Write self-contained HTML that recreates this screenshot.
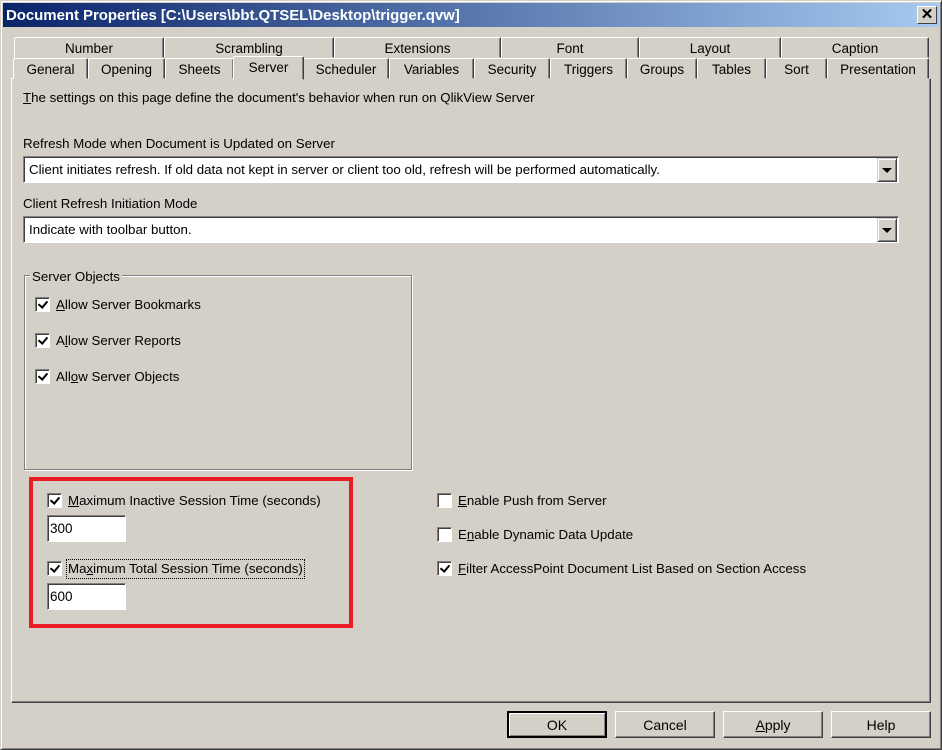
<!DOCTYPE html>
<html><head><style>
*{box-sizing:border-box;margin:0;padding:0}
body{width:942px;height:750px;background:#d4d0c8;font-family:"Liberation Sans",sans-serif;font-size:13.3px;color:#000;position:relative;overflow:hidden}
.a{position:absolute}
.win{left:0;top:0;width:942px;height:750px;border:1px solid #d4d0c8;border-right-color:#404040;border-bottom-color:#404040;box-shadow:inset 1px 1px 0 #fff,inset -1px -1px 0 #808080}
.title{left:3px;top:3px;width:936px;height:24px;background:linear-gradient(90deg,#0a246a,#a6caf0);color:#fff;font-weight:bold;font-size:15px;letter-spacing:-0.05px;line-height:25px;padding-left:3px}
.x{left:917px;top:6px;width:20px;height:18px;background:#d4d0c8;border:1px solid;border-color:#fff #404040 #404040 #fff;color:#000;font-weight:bold;font-size:15px;line-height:15px;text-align:center}
.tab{height:21px;border:1px solid;border-color:#fff #404040 transparent #fff;box-shadow:inset -1px 0 0 #808080;text-align:center;line-height:21px;font-size:13.5px;background:#d4d0c8;border-radius:2px 2px 0 0}
.panel{left:11px;top:78px;width:920px;height:625px;border:1px solid;border-color:#fff #404040 #404040 #fff;box-shadow:inset -1px -1px 0 #808080}
.combo{height:27px;background:#fff;border:1px solid;border-color:#808080 #fff #fff #808080;box-shadow:inset 1px 1px 0 #404040;line-height:26px;padding-left:5px}
.dd{right:1px;top:1px;width:20px;height:24px;background:#d4d0c8;border:1px solid;border-color:#d4d0c8 #404040 #404040 #d4d0c8;box-shadow:inset 1px 1px 0 #fff,inset -1px -1px 0 #808080}
.dd:after{content:"";position:absolute;left:4px;top:9px;border-left:5px solid transparent;border-right:5px solid transparent;border-top:5px solid #000}
.cb{width:15px;height:15px;background:#fff;border:1px solid;border-color:#808080 #fff #fff #808080;box-shadow:inset 1px 1px 0 #404040}
.cb.c:after{content:"";position:absolute;left:4px;top:1px;width:4px;height:7px;border-right:2px solid #000;border-bottom:2px solid #000;transform:rotate(40deg)}
.lbl{line-height:18px}
.edit{width:79px;height:27px;background:#fff;border:1px solid;border-color:#808080 #fff #fff #808080;box-shadow:inset 1px 1px 0 #404040;padding-left:2px;line-height:26px;font-size:13.5px}
.btn{top:711px;width:100px;height:27px;border:1px solid;border-color:#fff #404040 #404040 #fff;box-shadow:inset -1px -1px 0 #808080;text-align:center;line-height:26px;font-size:14px}
u{text-decoration:underline}
</style></head><body>
<div class="a win"></div>
<div class="a title">Document Properties [C:\Users\bbt.QTSEL\Desktop\trigger.qvw]</div>
<div class="a x">✕</div>

<div class="a tab" style="left:14px;top:37px;width:150px">Number</div>
<div class="a tab" style="left:164px;top:37px;width:170px">Scrambling</div>
<div class="a tab" style="left:334px;top:37px;width:167px">Extensions</div>
<div class="a tab" style="left:501px;top:37px;width:138px">Font</div>
<div class="a tab" style="left:639px;top:37px;width:142px">Layout</div>
<div class="a tab" style="left:781px;top:37px;width:148px">Caption</div>

<div class="a panel"></div>
<div class="a tab" style="left:13px;top:58px;width:75px">General</div>
<div class="a tab" style="left:88px;top:58px;width:77px">Opening</div>
<div class="a tab" style="left:165px;top:58px;width:69px">Sheets</div>
<div class="a tab" style="left:303px;top:58px;width:86px">Scheduler</div>
<div class="a tab" style="left:389px;top:58px;width:85px">Variables</div>
<div class="a tab" style="left:474px;top:58px;width:76px">Security</div>
<div class="a tab" style="left:550px;top:58px;width:77px">Triggers</div>
<div class="a tab" style="left:627px;top:58px;width:70px">Groups</div>
<div class="a tab" style="left:697px;top:58px;width:69px">Tables</div>
<div class="a tab" style="left:766px;top:58px;width:61px">Sort</div>
<div class="a tab" style="left:827px;top:58px;width:102px">Presentation</div>
<div class="a tab" style="left:233px;top:56px;width:71px;height:24px;line-height:22px">Server</div>

<div class="a lbl" style="left:23px;top:89px"><u>T</u>he settings on this page define the document's behavior when run on QlikView Server</div>
<div class="a lbl" style="left:23px;top:135px">Refresh Mode when Document is Updated on Server</div>
<div class="a combo" style="left:23px;top:156px;width:876px">Client initiates refresh. If old data not kept in server or client too old, refresh will be performed automatically.<div class="a dd"></div></div>
<div class="a lbl" style="left:23px;top:195px">Client Refresh Initiation Mode</div>
<div class="a combo" style="left:23px;top:216px;width:876px">Indicate with toolbar button.<div class="a dd"></div></div>

<div class="a" style="left:24px;top:275px;width:388px;height:195px;border:1px solid #808080;box-shadow:1px 1px 0 #fff,inset 1px 1px 0 #fff"></div>
<div class="a lbl" style="left:30px;top:268px;background:#d4d0c8;padding:0 2px">Server Objects</div>
<div class="a cb c" style="left:35px;top:297px"></div><div class="a lbl" style="left:56px;top:296px"><u>A</u>llow Server Bookmarks</div>
<div class="a cb c" style="left:35px;top:333px"></div><div class="a lbl" style="left:56px;top:332px">A<u>l</u>low Server Reports</div>
<div class="a cb c" style="left:35px;top:369px"></div><div class="a lbl" style="left:56px;top:368px">All<u>o</u>w Server Objects</div>

<div class="a" style="left:29px;top:477px;width:324px;height:151px;border:4px solid #ec1c24"></div>
<div class="a cb c" style="left:47px;top:493px"></div><div class="a lbl" style="left:68px;top:492px"><u>M</u>aximum Inactive Session Time (seconds)</div>
<div class="a edit" style="left:47px;top:515px">300</div>
<div class="a cb c" style="left:47px;top:561px"></div><div class="a lbl" style="left:67px;top:560px;outline:1px dotted #000;padding:0 1px">Ma<u>x</u>imum Total Session Time (seconds)</div>
<div class="a edit" style="left:47px;top:583px">600</div>

<div class="a cb" style="left:437px;top:493px"></div><div class="a lbl" style="left:458px;top:492px"><u>E</u>nable Push from Server</div>
<div class="a cb" style="left:437px;top:527px"></div><div class="a lbl" style="left:458px;top:526px">E<u>n</u>able Dynamic Data Update</div>
<div class="a cb c" style="left:437px;top:561px"></div><div class="a lbl" style="left:458px;top:560px"><u>F</u>ilter AccessPoint Document List Based on Section Access</div>

<div class="a btn" style="left:507px;border:2px solid #000;box-shadow:inset 1px 1px 0 #fff,inset -1px -1px 0 #808080;line-height:24px">OK</div>
<div class="a btn" style="left:615px">Cancel</div>
<div class="a btn" style="left:723px"><u>A</u>pply</div>
<div class="a btn" style="left:831px">Help</div>
</body></html>
